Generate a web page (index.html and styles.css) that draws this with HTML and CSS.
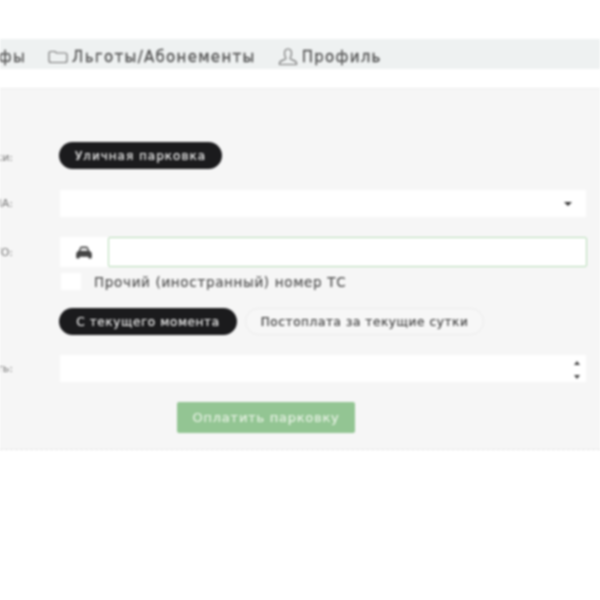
FILE: index.html
```html
<!DOCTYPE html>
<html lang="ru">
<head>
<meta charset="utf-8">
<title>Оплата парковки</title>
<link rel="stylesheet" href="styles.css">
</head>
<body>
<div class="page">
  <nav class="nav">
    <a class="nav-item nav-first">Тарифы</a>
    <a class="nav-item">
      <svg class="nav-icon" width="20" height="14" viewBox="0 0 20 14" fill="none" stroke="#777" stroke-width="1.2"><path d="M1 3.5 Q1 1.5 3 1.5 H7 L8.5 3 H17 Q19 3 19 5 V10.5 Q19 12.5 17 12.5 H3 Q1 12.5 1 10.5 Z"/></svg>
      <span>Льготы/Абонементы</span>
    </a>
    <a class="nav-item">
      <svg class="nav-icon" width="20" height="18" viewBox="0 0 20 18" fill="none" stroke="#777" stroke-width="1.2"><path d="M6.5 5.5 C6.5 2.8 8 1 10 1 C12 1 13.500 2.800 13.500 5.500 C13.500 8 12.300 9.500 12 10.500 C12 12 18 12 18.500 15 V16.500 H1.500 V15 C2 12 8 12 8 10.500 C7.700 9.500 6.500 8 6.500 5.500 Z"/></svg>
      <span>Профиль</span>
    </a>
  </nav>

  <main class="panel">
    <div class="row row-type">
      <div class="label">Тип парковки:</div>
      <div class="control"><span class="pill pill-on">Уличная парковка</span></div>
    </div>
    <div class="row row-zone">
      <div class="label">ЗОНА:</div>
      <div class="control">
        <div class="field field-select"><span class="caret"></span></div>
      </div>
    </div>
    <div class="row row-plate">
      <div class="label">АВТО:</div>
      <div class="control input-group">
        <div class="addon">
          <svg width="18" height="13" viewBox="0 0 20 15" fill="#444"><path d="M5.500 1.500 Q6 .5 7.500 .5 H12.500 Q14 .5 14.500 1.500 L16 5.500 Q19 6.500 19 9 V13 Q19 14.500 17.500 14.500 H16 Q15 14.500 15 13 V12.500 H5 V13 Q5 14.500 4 14.500 H2.500 Q1 14.500 1 13 V9 Q1 6.500 4 5.500 Z M6.800 2.500 L5.800 5.500 H14.200 L13.200 2.500 Z" fill-rule="evenodd"/></svg>
        </div>
        <div class="plate-input"></div>
      </div>
    </div>
    <div class="row row-check">
      <div class="label"></div>
      <div class="control check-line">
        <span class="checkbox"></span>
        <span class="check-text">Прочий (иностранный) номер ТС</span>
      </div>
    </div>
    <div class="row row-time">
      <div class="label"></div>
      <div class="control pills">
        <span class="pill pill-on pill-wide">С текущего момента</span>
        <span class="pill pill-off">Постоплата за текущие сутки</span>
      </div>
    </div>
    <div class="row row-duration">
      <div class="label">Длительность:</div>
      <div class="control">
        <div class="field field-number">
          <span class="spin"><i class="up"></i><i class="down"></i></span>
        </div>
      </div>
    </div>
    <div class="row row-submit">
      <button class="pay" type="button">Оплатить парковку</button>
    </div>
  </main>
</div>
</body>
</html>
```
FILE: styles.css
```css
* { box-sizing: border-box; }
html, body { margin: 0; background: #fff; }
body { overflow: hidden; height: 600px; font-family: "DejaVu Sans", "Liberation Sans", sans-serif; color: #555; }
.page { width: 600px; height: 600px; overflow: hidden; padding-top: 39px; filter: blur(0.8px); }

.nav { display: flex; align-items: center; height: 30px; padding-top: 6px; background: #eef1f1; gap: 22px; white-space: nowrap; font-size: 15px; letter-spacing: 1.3px; color: #555; -webkit-text-stroke: 0.3px #555; margin-left: -44px; }
.nav-item { display: flex; align-items: center; gap: 4px; }
.nav-icon { flex: none; }

.panel { margin-top: 19px; height: 362px; background: #f6f6f6; border-top: 1px solid #ececec; border-bottom: 1px dashed #e2e2e2; padding-top: 53px; }
.row { display: flex; align-items: center; }
.label { width: 13px; margin-right: 27px; flex: none; display: flex; justify-content: flex-end; white-space: nowrap; font-size: 11px; color: #777; }
.control { margin-left: 20px; width: 526px; flex: none; }

.row-type { height: 27px; }
.row-type .label { padding-top: 3px; }
.row-type .control { margin-left: 19px; }
.row-zone { margin-top: 21px; height: 27px; }
.row-plate { margin-top: 20px; height: 30px; }
.row-check { margin-top: 6px; height: 17px; }
.row-time { margin-top: 18px; height: 27px; }
.row-time .control { margin-left: 19px; }
.row-duration { margin-top: 20px; height: 27px; }
.row-submit { margin-top: 20px; height: 31px; padding-left: 177px; }

.pill { display: inline-flex; align-items: center; justify-content: center; height: 27px; border-radius: 14px; font-size: 12px; letter-spacing: 0.63px; white-space: nowrap; -webkit-text-stroke: 0.2px currentColor; }
.pill-on { background: #1b1b1d; color: #e8e8e8; }
.row-type .pill { width: 163px; letter-spacing: 1px; }
.pills { display: flex; gap: 8px; }
.pill-wide { width: 178px; }
.pill-off { width: 239px; background: #f7f7f7; border: 1px solid #ebebeb; color: #444; }

.field { background: #fff; height: 27px; display: flex; align-items: center; justify-content: flex-end; }
.caret { width: 0; height: 0; border-left: 4px solid transparent; border-right: 4px solid transparent; border-top: 4px solid #333; margin-right: 14px; }
.spin { display: flex; flex-direction: column; gap: 10px; margin-right: 6px; padding-top: 2px; }
.spin i { display: block; width: 0; height: 0; border-left: 3px solid transparent; border-right: 3px solid transparent; }
.spin .up { border-bottom: 4px solid #444; }
.spin .down { border-top: 4px solid #444; }

.input-group { display: flex; height: 30px; width: 527px; }
.addon { width: 48px; flex: none; background: #fff; display: flex; align-items: center; justify-content: center; }
.plate-input { flex: 1; background: #fff; border: 1.5px solid #b5dcb5; border-radius: 2px; }

.check-line { display: flex; align-items: center; }
.checkbox { width: 20px; height: 17px; background: #fff; margin-left: 1px; flex: none; }
.check-text { margin-left: 13px; font-size: 13.5px; letter-spacing: 0.67px; color: #555; white-space: nowrap; -webkit-text-stroke: 0.2px #555; }

.pay { width: 178px; height: 31px; border: 0; border-radius: 2px; background: #93c593; color: #e6f1e3; font: 13px "DejaVu Sans", "Liberation Sans", sans-serif; letter-spacing: 0.75px; padding: 0; -webkit-text-stroke: 0.2px currentColor; }
```
